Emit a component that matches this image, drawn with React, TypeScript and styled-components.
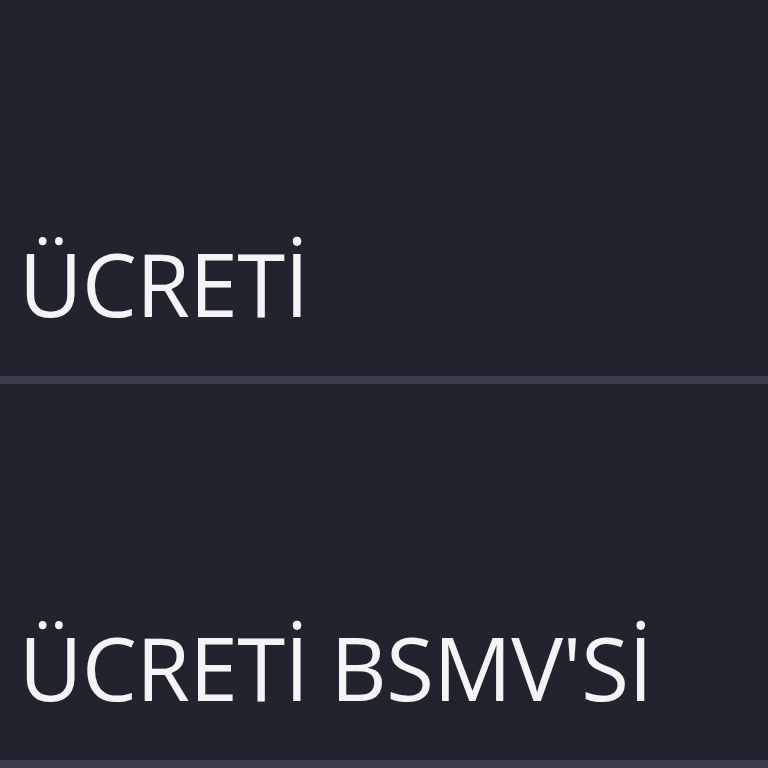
import styled, { createGlobalStyle } from "styled-components";

const GlobalStyle = createGlobalStyle`
  html, body {
    margin: 0;
    padding: 0;
    background: #21232f;
  }
  body {
    font-family: "Open Sans", "Noto Sans", sans-serif;
    -webkit-font-smoothing: antialiased;
  }
`;

const rows = ["ÜCRETİ", "ÜCRETİ BSMV'Sİ"];

const Table = styled.div`
  display: flex;
  flex-direction: column;
  width: 768px;
  height: 768px;
  overflow: hidden;
  background: #21232f;
`;

const Row = styled.div`
  display: flex;
  align-items: flex-start;
  height: 384px;
  box-sizing: border-box;
  padding: 240px 0 0 19px;
  border-bottom: 8px solid #3a3c49;
  flex-shrink: 0;
`;

const Label = styled.span`
  font-size: 87px;
  line-height: 87px;
  font-weight: 400;
  letter-spacing: -0.5px;
  color: #f4f4f6;
  white-space: nowrap;
`;

const App = () => {
  return (
    <>
      <GlobalStyle />
      <Table>
        {rows.map((label) => (
          <Row key={label}>
            <Label>{label}</Label>
          </Row>
        ))}
      </Table>
    </>
  );
};

export default App;
